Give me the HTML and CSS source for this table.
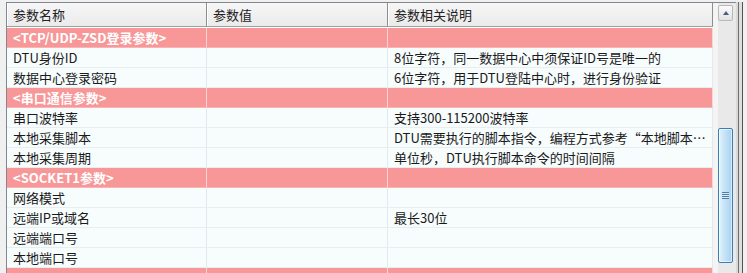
FILE: index.html
```html
<!DOCTYPE html>
<html lang="zh-CN">
<head>
    <meta charset="UTF-8">
    <title>参数设置</title>
    <link rel="stylesheet" href="styles.css">
</head>
<body>

    <div class="window">
        <div class="listview">
            <div class="grid">
                <div class="row head">
                    <div class="cell">参数名称</div>
                    <div class="cell">参数值</div>
                    <div class="cell">参数相关说明</div>
                </div>
                <div class="rows">
                    <div class="row group">
                        <div class="cell">&lt;TCP/UDP-ZSD登录参数&gt;</div>
                        <div class="cell"></div>
                        <div class="cell"></div>
                    </div>
                    <div class="row">
                        <div class="cell">DTU身份ID</div>
                        <div class="cell"></div>
                        <div class="cell">8位字符，同一数据中心中须保证ID号是唯一的</div>
                    </div>
                    <div class="row">
                        <div class="cell">数据中心登录密码</div>
                        <div class="cell"></div>
                        <div class="cell">6位字符，用于DTU登陆中心时，进行身份验证</div>
                    </div>
                    <div class="row group">
                        <div class="cell">&lt;串口通信参数&gt;</div>
                        <div class="cell"></div>
                        <div class="cell"></div>
                    </div>
                    <div class="row">
                        <div class="cell">串口波特率</div>
                        <div class="cell"></div>
                        <div class="cell">支持300-115200波特率</div>
                    </div>
                    <div class="row">
                        <div class="cell">本地采集脚本</div>
                        <div class="cell"></div>
                        <div class="cell">DTU需要执行的脚本指令，编程方式参考“本地脚本编程说明”</div>
                    </div>
                    <div class="row">
                        <div class="cell">本地采集周期</div>
                        <div class="cell"></div>
                        <div class="cell">单位秒，DTU执行脚本命令的时间间隔</div>
                    </div>
                    <div class="row group">
                        <div class="cell">&lt;SOCKET1参数&gt;</div>
                        <div class="cell"></div>
                        <div class="cell"></div>
                    </div>
                    <div class="row">
                        <div class="cell">网络模式</div>
                        <div class="cell"></div>
                        <div class="cell"></div>
                    </div>
                    <div class="row">
                        <div class="cell">远端IP或域名</div>
                        <div class="cell"></div>
                        <div class="cell">最长30位</div>
                    </div>
                    <div class="row">
                        <div class="cell">远端端口号</div>
                        <div class="cell"></div>
                        <div class="cell"></div>
                    </div>
                    <div class="row">
                        <div class="cell">本地端口号</div>
                        <div class="cell"></div>
                        <div class="cell"></div>
                    </div>
                    <!-- next section, scrolled below the fold -->
                    <div class="row group">
                        <div class="cell"></div>
                        <div class="cell"></div>
                        <div class="cell"></div>
                    </div>
                </div>
            </div>

            <!-- vertical scrollbar -->
            <div class="scrollbar">
                <div class="arrow"><span class="tri"></span></div>
                <div class="thumb"><span class="grip"></span></div>
            </div>
        </div>
        <div class="edge"></div>
    </div>

</body>
</html>
```

FILE: styles.css
```css
html, body {
    margin: 0;
    height: 100%;
}
body {
    background-color: #f0f0f0;
    font-family: "Noto Sans CJK SC", "Microsoft YaHei", sans-serif;
    font-size: 13px;
    color: #1a1a1a;
    overflow: hidden;
}
.window {
    display: flex;
    height: 273px;
    padding: 2px 0 0 6px;
    box-sizing: border-box;
}
.listview {
    display: flex;
    border-top: 1px solid #828790;
    border-left: 1px solid #828790;
    background: #fff;
}
.grid {
    width: 706px;
}
.row {
    display: grid;
    grid-template-columns: 200px 181px 325px;
    height: 20px;
    background: #f7fcfd;
}
.cell {
    box-sizing: border-box;
    padding: 0 6px;
    line-height: 19px;
    white-space: nowrap;
    overflow: hidden;
    text-overflow: ellipsis;
    border-right: 1px solid #e3eaed;
    border-bottom: 1px solid #e8eef0;
}

/* column header */
.row.head {
    height: 24px;
    background: linear-gradient(#f6f6f6, #ebebeb);
    border-bottom: 1px solid #a0a0a0;
    box-sizing: border-box;
}
.head .cell {
    line-height: 23px;
    border-bottom: none;
    border-right: 1px solid #8e8e8e;
    box-shadow: inset 1px 0 #fff;
    color: #222;
}
.rows {
    padding-top: 1px;
}

/* section rows */
.row.group {
    background: #f79797;
}
.group .cell {
    color: #fff;
    font-weight: bold;
    border-right-color: #fbd3d3;
    border-bottom-color: #f9b5b5;
}

.scrollbar {
    width: 23px;
    background: linear-gradient(to right, #f4f4f4 0 5px, #e9e9e9 5px);
    display: flex;
    flex-direction: column;
    align-items: flex-start;
}
.arrow {
    width: 15px;
    height: 16px;
    margin: 2px 0 0 5px;
    box-sizing: border-box;
    border: 1px solid #b8b8b8;
    border-radius: 2px;
    background: linear-gradient(#fbfbfb, #e2e2e2);
    display: flex;
    align-items: center;
    justify-content: center;
}
.tri {
    width: 0;
    height: 0;
    border-left: 3px solid transparent;
    border-right: 3px solid transparent;
    border-bottom: 4px solid #4a5d7a;
}
.thumb {
    width: 15px;
    height: 135px;
    margin: 107px 0 0 5px;
    box-sizing: border-box;
    border: 1px solid #3c7fb1;
    border-radius: 2px;
    background: linear-gradient(to right, #e3f2fc, #c4e3f7 45%, #a8d2f1);
    box-shadow: inset 0 0 0 1px rgba(255, 255, 255, 0.55);
    display: flex;
    align-items: center;
    justify-content: center;
}
.grip {
    width: 7px;
    height: 7px;
    background: repeating-linear-gradient(#4f7fa6 0 1px, #d6ecfa 1px 2px);
}

/* outer double frame on the right */
.edge {
    width: 11px;
    background: linear-gradient(to right,
        #d9d9d9 0 2px, #6e6e6e 2px 3px, #dedede 3px 6px,
        #555 6px 7px, #f0f0f0 7px);
}
```
